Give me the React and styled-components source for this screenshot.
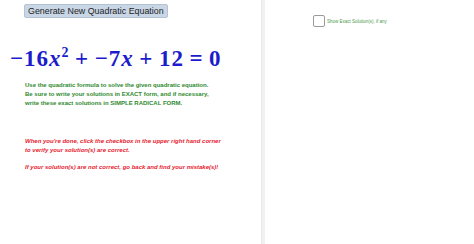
import React from 'react';
import styled, { createGlobalStyle } from 'styled-components';

const GlobalStyle = createGlobalStyle`
  html, body {
    margin: 0;
    padding: 0;
    background: #ffffff;
    font-family: "Liberation Sans", Arial, sans-serif;
  }
`;

const Page = styled.div`
  width: 474px;
  height: 244px;
  display: flex;
  overflow: hidden;
  background: #ffffff;
`;

const LeftPanel = styled.div`
  width: 261px;
  flex-shrink: 0;
  display: flex;
  flex-direction: column;
  padding: 4px 0 0 0;
  box-sizing: border-box;
`;

const Divider = styled.div`
  width: 4px;
  flex-shrink: 0;
  background: #f1f1f1;
  border-left: 1px solid #e9e9e9;
  box-sizing: border-box;
`;

const RightPanel = styled.div`
  flex: 1;
  padding: 15px 0 0 48px;
`;

const GenerateButton = styled.button`
  align-self: flex-start;
  margin-left: 24px;
  height: 14px;
  padding: 0 3px;
  font-family: "Liberation Sans", Arial, sans-serif;
  font-size: 8.9px;
  line-height: 12px;
  color: #1e1e1e;
  background: #c8d6e6;
  border: 1px solid #b3c2d4;
  border-radius: 2px;
`;

const Equation = styled.div`
  margin: 29px 0 0 10px;
  font-family: "Liberation Serif", "Times New Roman", serif;
  font-weight: bold;
  font-size: 23px;
  line-height: 24px;
  color: #1c1ccc;
  white-space: nowrap;
  letter-spacing: 1px;
`;

const Var = styled.i`
  font-style: italic;
`;

const Op = styled.span`
  margin: 0 5.5px;
`;

const Sup = styled.sup`
  font-size: 14px;
  vertical-align: 9px;
  line-height: 0;
`;

const Paragraph = styled.p`
  margin: ${p => p.$top}px 0 0 25px;
  font-size: 6px;
  line-height: 9px;
  font-weight: bold;
  font-style: ${p => (p.$italic ? 'italic' : 'normal')};
  color: ${p => p.$color};
`;

const CheckRow = styled.label`
  display: flex;
  align-items: center;
  gap: 2px;
`;

const Box = styled.span`
  width: 10px;
  height: 10px;
  border: 1px solid #9a9a9a;
  border-radius: 2px;
  background: #fff;
`;

const CheckLabel = styled.span`
  font-size: 4.5px;
  color: #4a9a4a;
`;

export default function App() {
  return (
    <>
      <GlobalStyle />
      <Page>
        <LeftPanel>
          <GenerateButton>Generate New Quadratic Equation</GenerateButton>
          <Equation>
            −16<Var>x</Var><Sup>2</Sup>
            <Op>+</Op>−7<Var>x</Var>
            <Op>+</Op>12<Op>=</Op>0
          </Equation>
          <Paragraph $top={10} $color="#2f8a2f">
            Use the quadratic formula to solve the given quadratic equation.
            <br />
            Be sure to write your solutions in EXACT form, and if necessary,
            <br />
            write these exact solutions in SIMPLE RADICAL FORM.
          </Paragraph>
          <Paragraph $top={29} $italic $color="#e8202e">
            When you're done, click the checkbox in the upper right hand corner
            <br />
            to verify your solution(s) are correct.
          </Paragraph>
          <Paragraph $top={8} $italic $color="#e8202e">
            If your solution(s) are not correct, go back and find your mistake(s)!
          </Paragraph>
        </LeftPanel>
        <Divider />
        <RightPanel>
          <CheckRow>
            <Box />
            <CheckLabel>Show Exact Solution(s), if any</CheckLabel>
          </CheckRow>
        </RightPanel>
      </Page>
    </>
  );
}
